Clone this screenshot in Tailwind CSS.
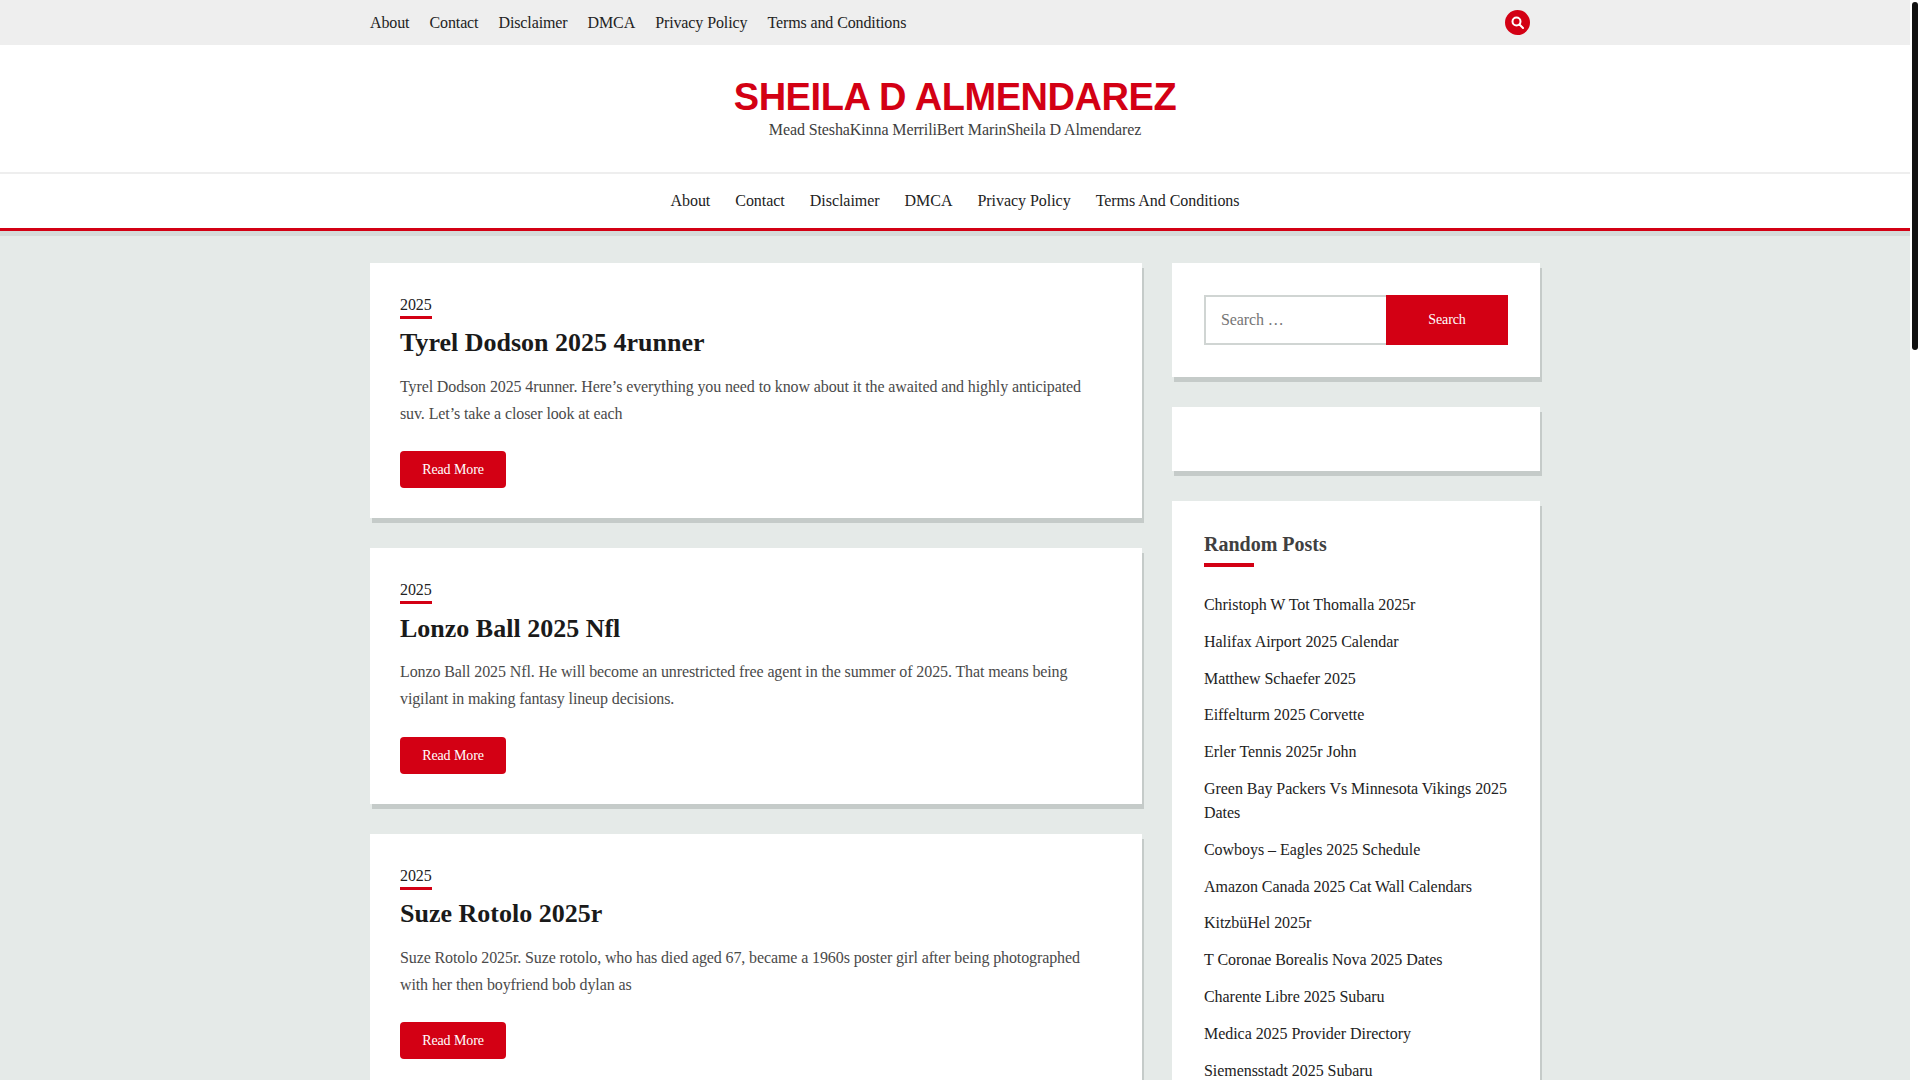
<!DOCTYPE html>
<html lang="en">
<head>
    <meta charset="UTF-8">
    <meta name="viewport" content="width=device-width, initial-scale=1.0">
    <title>Sheila D Almendarez</title>
    <script src="https://cdn.jsdelivr.net/npm/@tailwindcss/browser@4"></script>
</head>
<body class="h-screen overflow-hidden flex bg-white font-['Liberation_Serif',serif] text-base tracking-[-0.11px] text-[#404040]">
    <!-- page column -->
    <div class="w-[1910px] h-[1080px] overflow-hidden bg-[#e5eae8] shrink-0">
        <!-- top bar -->
        <div class="h-[45px] bg-[#eeeeee]">
            <div class="w-[1170px] mx-auto flex items-center justify-between h-full">
                <nav class="flex gap-5 text-[#222222]">
                    <a>About</a>
                    <a>Contact</a>
                    <a>Disclaimer</a>
                    <a>DMCA</a>
                    <a>Privacy Policy</a>
                    <a>Terms and Conditions</a>
                </nav>
                <span class="w-[25px] h-[25px] rounded-full bg-[#d30014] flex items-center justify-center mr-[10px]">
                    <svg class="w-[13px] h-[13px]" viewBox="0 0 13 13" fill="none" stroke="#ffffff" stroke-width="2">
                        <circle cx="5.5" cy="5.5" r="4"/>
                        <path d="M8.5 8.5 12 12" stroke-linecap="round"/>
                    </svg>
                </span>
            </div>
        </div>

        <!-- site branding -->
        <header class="bg-white h-[129px] text-center pt-[29px] border-b-2 border-[#eeeeee]">
            <h1 class="font-['Liberation_Sans',sans-serif] font-bold text-[38px] tracking-[-0.45px] leading-[46px] text-[#d30014]">SHEILA D ALMENDAREZ</h1>
            <p class="leading-[18px] pt-px">Mead SteshaKinna MerriliBert MarinSheila D Almendarez</p>
        </header>

        <!-- main nav -->
        <nav class="bg-white h-[57px] border-b-[3px] border-[#d30014] shadow-[0_5px_0_#d5dbd9] flex justify-center items-center gap-[25px] tracking-[-0.04px] text-[#222222]">
            <a>About</a>
            <a>Contact</a>
            <a>Disclaimer</a>
            <a>DMCA</a>
            <a>Privacy Policy</a>
            <a>Terms And Conditions</a>
        </nav>

        <div class="w-[1170px] mx-auto flex gap-[30px] items-start pt-8">
            <!-- posts -->
            <main class="w-[772px] flex flex-col gap-[30px] shrink-0">
                <article class="bg-white h-[255px] p-[30px] shadow-[2px_5px_0_#c5cbc9]">
                    <a class="inline-block border-b-[3px] border-[#d30014] text-[#222222] leading-[23px]">2025</a>
                    <h2 class="font-bold text-[26px] tracking-normal leading-[34px] text-[#1a1a1a] mt-[7px] mb-[13px]">Tyrel Dodson 2025 4runner</h2>
                    <p class="w-[690px] leading-[27px] text-[#4a4a4a]">Tyrel Dodson 2025 4runner. Here’s everything you need to know about it the awaited and highly anticipated suv. Let’s take a closer look at each</p>
                    <a class="inline-flex items-center justify-center w-[106px] h-[37px] mt-6 rounded bg-[#d30014] text-white text-sm">Read More</a>
                </article>
                <article class="bg-white h-[256px] p-[30px] shadow-[2px_5px_0_#c5cbc9]">
                    <a class="inline-block border-b-[3px] border-[#d30014] text-[#222222] leading-[23px]">2025</a>
                    <h2 class="font-bold text-[26px] tracking-normal leading-[34px] text-[#1a1a1a] mt-2 mb-3">Lonzo Ball 2025 Nfl</h2>
                    <p class="w-[690px] leading-[27px] text-[#4a4a4a]">Lonzo Ball 2025 Nfl. He will become an unrestricted free agent in the summer of 2025. That means being vigilant in making fantasy lineup decisions.</p>
                    <a class="inline-flex items-center justify-center w-[106px] h-[37px] mt-[25px] rounded bg-[#d30014] text-white text-sm">Read More</a>
                </article>
                <article class="bg-white h-[255px] p-[30px] shadow-[2px_5px_0_#c5cbc9]">
                    <a class="inline-block border-b-[3px] border-[#d30014] text-[#222222] leading-[23px]">2025</a>
                    <h2 class="font-bold text-[26px] tracking-normal leading-[34px] text-[#1a1a1a] mt-[7px] mb-[13px]">Suze Rotolo 2025r</h2>
                    <p class="w-[690px] leading-[27px] text-[#4a4a4a]">Suze Rotolo 2025r. Suze rotolo, who has died aged 67, became a 1960s poster girl after being photographed with her then boyfriend bob dylan as</p>
                    <a class="inline-flex items-center justify-center w-[106px] h-[37px] mt-6 rounded bg-[#d30014] text-white text-sm">Read More</a>
                </article>
            </main>

            <!-- sidebar -->
            <aside class="w-[368px] flex flex-col gap-[30px] shrink-0">
                <div class="bg-white h-[114px] px-8 pt-8 shadow-[2px_5px_0_#c5cbc9]">
                    <form class="flex h-[50px]">
                        <input type="search" placeholder="Search …" class="w-[182px] border-2 border-[#d0d5d3] border-r-0 pl-[15px] outline-none placeholder:text-[#757575]">
                        <button type="button" class="w-[122px] bg-[#d30014] text-white text-sm">Search</button>
                    </form>
                </div>
                <div class="bg-white h-[64px] shadow-[2px_5px_0_#c5cbc9]"></div>
                <div class="bg-white h-[600px] px-8 pt-[30px] shadow-[2px_5px_0_#c5cbc9]">
                    <h3 class="font-bold text-xl leading-[26px] tracking-normal">Random Posts</h3>
                    <div class="w-[50px] h-1 bg-[#d30014] mt-[6px] mb-[26px]"></div>
                    <ul class="flex flex-col gap-[12.8px] -mr-1 tracking-[-0.05px] text-[#222222] leading-6">
                        <li class="w-[304px]">Christoph W Tot Thomalla 2025r</li>
                        <li class="w-[304px]">Halifax Airport 2025 Calendar</li>
                        <li class="w-[304px]">Matthew Schaefer 2025</li>
                        <li class="w-[304px]">Eiffelturm 2025 Corvette</li>
                        <li class="w-[304px]">Erler Tennis 2025r John</li>
                        <li class="w-[304px]">Green Bay Packers Vs Minnesota Vikings 2025 Dates</li>
                        <li class="w-[304px]">Cowboys – Eagles 2025 Schedule</li>
                        <li class="w-[304px]">Amazon Canada 2025 Cat Wall Calendars</li>
                        <li class="w-[304px]">KitzbüHel 2025r</li>
                        <li class="w-[304px]">T Coronae Borealis Nova 2025 Dates</li>
                        <li class="w-[304px]">Charente Libre 2025 Subaru</li>
                        <li class="w-[304px]">Medica 2025 Provider Directory</li>
                        <li class="w-[304px]">Siemensstadt 2025 Subaru</li>
                    </ul>
                </div>
            </aside>
        </div>
    </div>

    <!-- scrollbar -->
    <div class="flex-1 pl-0.5 pt-0.5">
        <div class="w-1.5 h-[348px] rounded-full bg-[#111111]"></div>
    </div>
</body>
</html>
